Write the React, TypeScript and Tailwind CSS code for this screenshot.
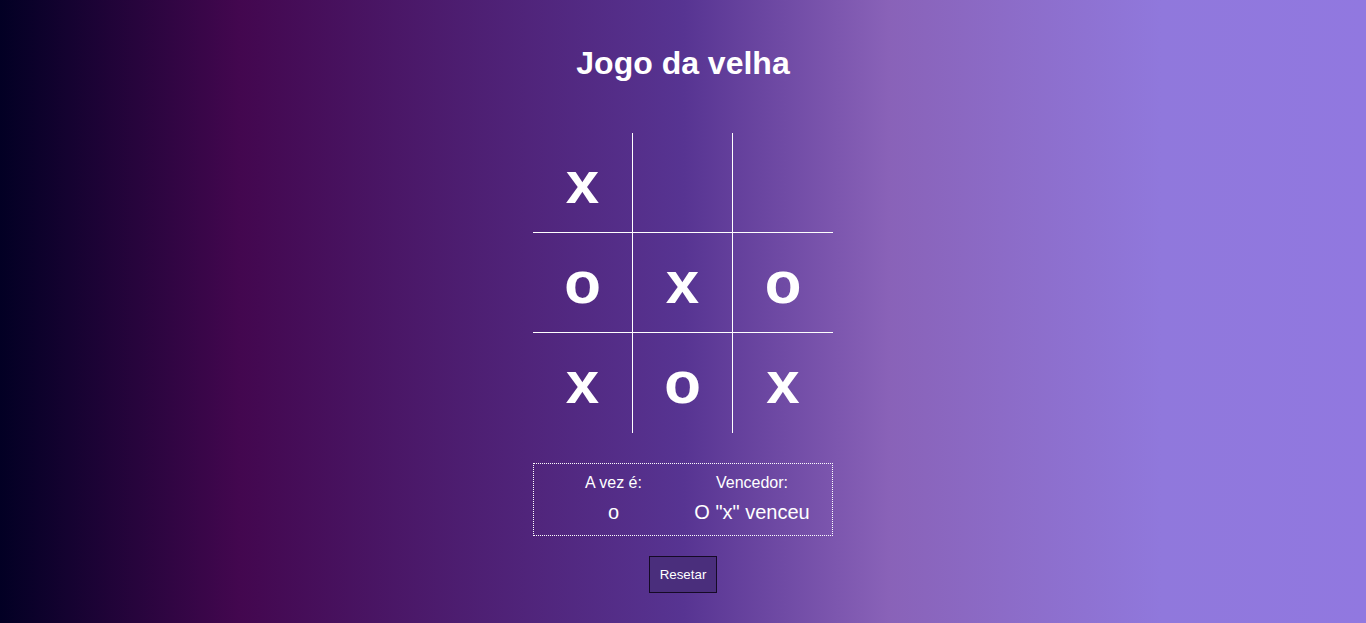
import React, { useState } from "react";

const initial = ["x", "", "", "o", "x", "o", "x", "o", "x"];

export default function App() {
  const [board] = useState<string[]>(initial);

  return (
    <div className="min-h-screen flex flex-col items-center bg-[linear-gradient(90deg,#020024_0%,#43074f_17.5%,#573492_50%,#8962b8_65%,#9078dc_85%,#9178e0_100%)] text-white font-['Liberation_Sans',Arial,sans-serif]">
      <h1 className="mt-[45px] text-[32px] leading-[37px] font-bold">Jogo da velha</h1>

      <div className="mt-[51px] grid grid-cols-[100px_100px_100px]">
        {board.map((v, i) => (
          <div
            key={i}
            className={
              "h-[100px] w-[100px] flex items-center justify-center text-[60px] leading-none font-bold border-white " +
              (i % 3 !== 2 ? "border-r " : "") +
              (i < 6 ? "border-b" : "")
            }
          >
            {v}
          </div>
        ))}
      </div>

      <div className="mt-[30px] w-[300px] h-[73px] border border-dotted border-white flex pt-[10px]">
        <div className="w-[159px] flex flex-col items-center">
          <span className="text-[16px] leading-[18px]">A vez é:</span>
          <span className="mt-[9px] text-[20px] leading-[23px]">o</span>
        </div>
        <div className="w-[118px] flex flex-col items-center">
          <span className="text-[16px] leading-[18px]">Vencedor:</span>
          <span className="mt-[9px] text-[20px] leading-[23px] whitespace-nowrap">O "x" venceu</span>
        </div>
      </div>

      <button className="mt-[20px] h-[37px] px-[10px] border border-[#150a25] bg-[#4a2e7c] text-[13.33px] text-white">
        Resetar
      </button>
    </div>
  );
}
